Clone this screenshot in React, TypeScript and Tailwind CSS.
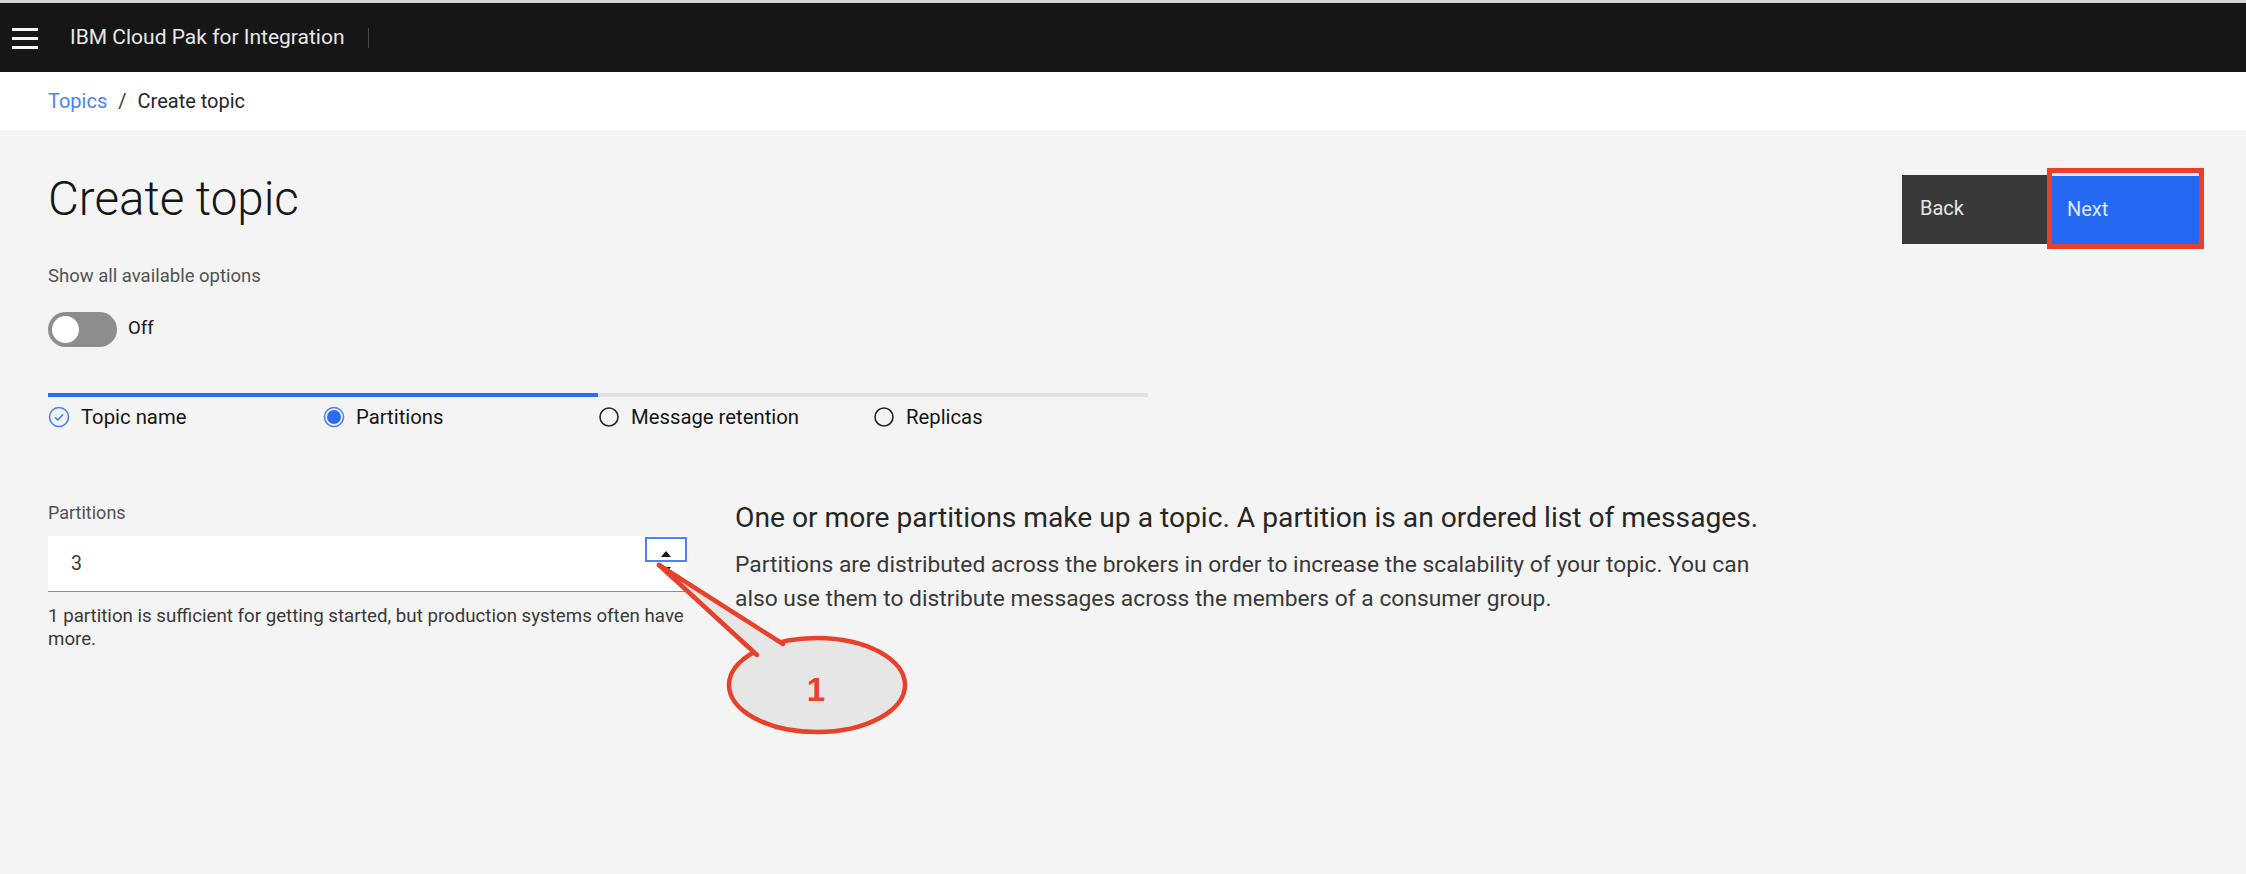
import React from 'react';

// --- small icons ---
const Hamburger = () => (
  <svg width="26" height="22" viewBox="0 0 26 22" className="block">
    <rect x="0" y="1" width="26" height="3" fill="#f4f4f4" />
    <rect x="0" y="10" width="26" height="3" fill="#f4f4f4" />
    <rect x="0" y="19" width="26" height="3" fill="#f4f4f4" />
  </svg>
);

const StepIcon = ({ kind }: { kind: 'done' | 'current' | 'todo' }) => {
  if (kind === 'done')
    return (
      <svg width="22" height="22" viewBox="0 0 22 22" className="shrink-0">
        <circle cx="11" cy="11" r="9.5" fill="none" stroke="#4a84f3" strokeWidth="1.6" />
        <path d="M7 11.2l2.8 2.8 5.2-5.6" fill="none" stroke="#4a84f3" strokeWidth="1.6" />
      </svg>
    );
  if (kind === 'current')
    return (
      <svg width="22" height="22" viewBox="0 0 22 22" className="shrink-0">
        <circle cx="11" cy="11" r="9.5" fill="none" stroke="#4a84f3" strokeWidth="1.6" />
        <circle cx="11" cy="11" r="7" fill="#2a6cf2" />
      </svg>
    );
  return (
    <svg width="22" height="22" viewBox="0 0 22 22" className="shrink-0">
      <circle cx="11" cy="11" r="9" fill="none" stroke="#262626" strokeWidth="1.6" />
    </svg>
  );
};

const steps: { label: string; kind: 'done' | 'current' | 'todo'; active: boolean }[] = [
  { label: 'Topic name', kind: 'done', active: true },
  { label: 'Partitions', kind: 'current', active: true },
  { label: 'Message retention', kind: 'todo', active: false },
  { label: 'Replicas', kind: 'todo', active: false },
];

// annotation balloon drawn over the page
const Callout = () => (
  <svg width="2246" height="874" className="absolute left-0 top-0 pointer-events-none">
    <ellipse cx="817" cy="685" rx="88" ry="47" fill="#e6e6e6" stroke="#e8402a" strokeWidth="4.5" />
    <polygon points="659,565 757,655 772,672 792,662 783,644" fill="#e6e6e6" />
    <line x1="659" y1="565" x2="757" y2="655" stroke="#e8402a" strokeWidth="4.5" strokeLinecap="round" />
    <line x1="659" y1="565" x2="783" y2="644" stroke="#e8402a" strokeWidth="4.5" strokeLinecap="round" />
    <text x="816" y="701" textAnchor="middle" fontFamily="'Liberation Sans', Arial, sans-serif" fontWeight="700" fontSize="33" fill="#e8402a">
      1
    </text>
  </svg>
);

export default function App() {
  return (
    <div className="relative w-full min-h-screen bg-[#f4f4f4] overflow-hidden font-['Roboto',_'Liberation_Sans',_sans-serif] text-[#161616]">
      {/* top bar */}
      <div className="h-[3px] bg-[#d4d4d4]" />
      <header className="h-[69px] bg-[#161616] flex items-center">
        <div className="pl-[12px] w-[70px]">
          <Hamburger />
        </div>
        <span className="text-[21px] text-[#e8e8e8]">IBM Cloud Pak for Integration</span>
        <div className="ml-[23px] w-px h-[20px] bg-[#4a4a4a]" />
      </header>

      {/* breadcrumb */}
      <div className="h-[58px] bg-white flex items-center pl-[48px] text-[20px]">
        <span className="text-[#4b83f4]">Topics</span>
        <span className="mx-[11px] text-[#393939]">/</span>
        <span className="text-[#262626]">Create topic</span>
      </div>

      <div className="flex justify-between">
        <div className="pl-[48px]">
          <h1 className="mt-[42px] text-[47.5px] leading-[55px] font-light text-[#161616]">Create topic</h1>

          <div className="mt-[39px] text-[18.5px] leading-[20px] text-[#525252]">Show all available options</div>

          <div className="mt-[26px] flex items-center gap-[11px]">
            <div className="w-[69px] h-[35px] rounded-full bg-[#8d8d8d] flex items-center pl-[4px]">
              <div className="w-[27px] h-[27px] rounded-full bg-white" />
            </div>
            <span className="text-[18.5px] leading-[20px] -mt-[3px] text-[#161616]">Off</span>
          </div>

          {/* progress indicator */}
          <div className="mt-[46px] flex">
            {steps.map((s) => (
              <div key={s.label} className="w-[275px]">
                <div className={s.active ? 'h-[4px] bg-[#2a6cf2]' : 'h-[4px] bg-[#e0e0e0]'} />
                <div className="mt-[8px] flex items-center gap-[11px]">
                  <StepIcon kind={s.kind} />
                  <span className="text-[20.3px] leading-[24px] text-[#161616]">{s.label}</span>
                </div>
              </div>
            ))}
          </div>
        </div>

        {/* actions */}
        <div className="flex items-end mt-[43px] mr-[47px] h-[71px]">
          <button className="w-[150px] h-[69px] bg-[#393939] text-[#e6e6e6] text-[20px] text-left pl-[18px] pb-[4px]">
            Back
          </button>
          <button className="w-[147px] h-[71px] bg-[#2569f3] border-t-[3px] border-[#dfe8fc] text-[#dce6fc] text-[20px] text-left pl-[15px] pb-[2px] outline outline-[5px] outline-[#e8402a]">
            Next
          </button>
        </div>
      </div>

      {/* partitions form + description */}
      <div className="mt-[74px] pl-[48px] flex gap-[48px]">
        <div className="w-[639px]">
          <label className="block text-[18px] leading-[20px] text-[#525252]">Partitions</label>
          <div className="mt-[13px] h-[56px] bg-white border-b border-[#8d8d8d] flex items-center justify-between pl-[23px]">
            <span className="text-[19.5px] text-[#393939]">3</span>
            <div className="self-start mt-[1px] flex flex-col items-center">
              <div className="w-[42px] h-[25px] border-2 border-[#4a84f3] flex items-end justify-center pb-[3px]">
                <div className="w-0 h-0 border-l-[5px] border-r-[5px] border-b-[6px] border-l-transparent border-r-transparent border-b-[#161616]" />
              </div>
              <div className="mt-[5px] w-0 h-0 border-l-[5px] border-r-[5px] border-t-[6px] border-l-transparent border-r-transparent border-t-[#161616]" />
            </div>
          </div>
          <p className="mt-[13px] text-[18.7px] leading-[23px] text-[#393939]">
            1 partition is sufficient for getting started, but production systems often have more.
          </p>
        </div>

        <div className="w-[1045px] -mt-[2px]">
          <h2 className="text-[28.2px] leading-[34px] text-[#262626]">
            One or more partitions make up a topic. A partition is an ordered list of messages.
          </h2>
          <p className="mt-[13px] text-[22.8px] leading-[34px] text-[#393939]">
            Partitions are distributed across the brokers in order to increase the scalability of your topic. You can also use
            them to distribute messages across the members of a consumer group.
          </p>
        </div>
      </div>

      <Callout />
    </div>
  );
}
